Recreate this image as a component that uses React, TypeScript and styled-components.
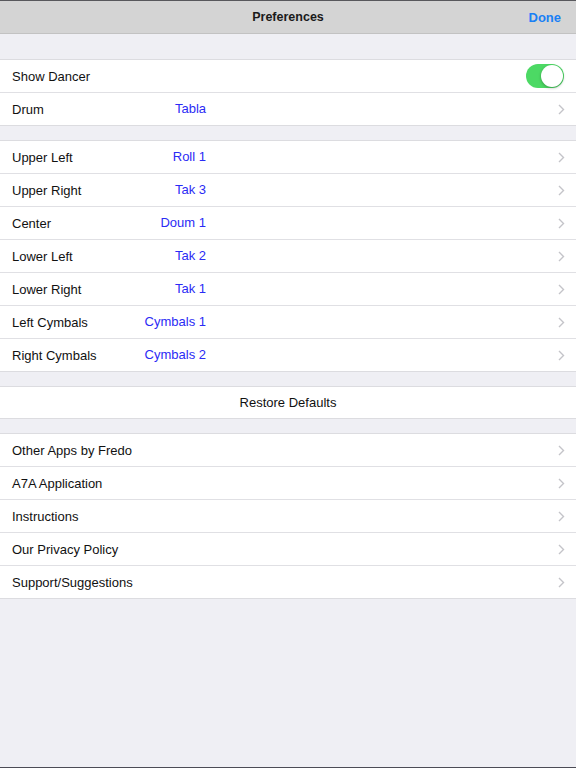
import styled, { createGlobalStyle } from 'styled-components'

const GlobalStyle = createGlobalStyle`
  html, body {
    margin: 0;
    padding: 0;
    background: #efeff4;
  }
  * {
    box-sizing: border-box;
  }
`

const Screen = styled.div`
  height: 768px;
  display: flex;
  flex-direction: column;
  background: #efeff4;
  border-top: 1px solid #58585c;
  border-bottom: 1px solid #4b4b55;
  font-family: 'Liberation Sans', Arial, sans-serif;
  font-size: 13px;
  color: #111;
`

const NavBar = styled.div`
  height: 33px;
  flex-shrink: 0;
  display: grid;
  grid-template-columns: 1fr auto 1fr;
  align-items: center;
  background: #d4d4d4;
  border-bottom: 1px solid #c2c2c2;
  padding: 0 15px;
`

const NavTitle = styled.div`
  font-weight: 700;
  font-size: 12.5px;
  color: #1a1a1a;
`

const NavButton = styled.div`
  justify-self: end;
  font-weight: 700;
  font-size: 13px;
  color: #1a80f5;
`

const Group = styled.div<{ $gap: number }>`
  margin-top: ${(p) => p.$gap}px;
  background: #fff;
  border-top: 1px solid #dcdce0;
  border-bottom: 1px solid #dcdce0;
`

const Row = styled.div`
  height: 32px;
  display: flex;
  align-items: center;
  padding: 0 12px;

  & + & {
    height: 33px;
    border-top: 1px solid #e0e0e4;
  }
`

const Label = styled.span`
  width: 120px;
  flex-shrink: 0;
  white-space: nowrap;
`

const Value = styled.span`
  width: 74px;
  text-align: right;
  color: #2b2bf5;
  white-space: nowrap;
  margin-top: -2px;
`

const Spacer = styled.span`
  flex: 1;
`

const CenterButton = styled.div`
  height: 31px;
  display: flex;
  align-items: center;
  justify-content: center;
  color: #111;
`

const Toggle = styled.div<{ $on: boolean }>`
  width: 38px;
  height: 24px;
  border-radius: 12px;
  background: ${(p) => (p.$on ? '#4cd964' : '#e5e5ea')};
  display: flex;
  align-items: center;
  justify-content: ${(p) => (p.$on ? 'flex-end' : 'flex-start')};
  padding: 1px;
`

const Knob = styled.div`
  width: 22px;
  height: 22px;
  border-radius: 50%;
  background: #fff;
  box-shadow: 0 1px 3px rgba(0, 0, 0, 0.3);
`

const ChevronIcon = styled.svg`
  margin-right: -1px;
`

const Chevron = () => (
  <ChevronIcon width="7" height="11" viewBox="0 0 7 11">
    <path d="M1 1 L5.5 5.5 L1 10" fill="none" stroke="#c4c4c9" strokeWidth="1.4" />
  </ChevronIcon>
)

const sounds: [string, string][] = [
  ['Upper Left', 'Roll 1'],
  ['Upper Right', 'Tak 3'],
  ['Center', 'Doum 1'],
  ['Lower Left', 'Tak 2'],
  ['Lower Right', 'Tak 1'],
  ['Left Cymbals', 'Cymbals 1'],
  ['Right Cymbals', 'Cymbals 2'],
]

const links = [
  'Other Apps by Fredo',
  'A7A Application',
  'Instructions',
  'Our Privacy Policy',
  'Support/Suggestions',
]

export default function App() {
  return (
    <>
      <GlobalStyle />
      <Screen>
        <NavBar>
          <span />
          <NavTitle>Preferences</NavTitle>
          <NavButton>Done</NavButton>
        </NavBar>

        <Group $gap={25}>
          <Row>
            <Label>Show Dancer</Label>
            <Spacer />
            <Toggle $on>
              <Knob />
            </Toggle>
          </Row>
          <Row>
            <Label>Drum</Label>
            <Value>Tabla</Value>
            <Spacer />
            <Chevron />
          </Row>
        </Group>

        <Group $gap={14}>
          {sounds.map(([label, value]) => (
            <Row key={label}>
              <Label>{label}</Label>
              <Value>{value}</Value>
              <Spacer />
              <Chevron />
            </Row>
          ))}
        </Group>

        <Group $gap={14}>
          <CenterButton>Restore Defaults</CenterButton>
        </Group>

        <Group $gap={14}>
          {links.map((label) => (
            <Row key={label}>
              <Label>{label}</Label>
              <Spacer />
              <Chevron />
            </Row>
          ))}
        </Group>
      </Screen>
    </>
  )
}
